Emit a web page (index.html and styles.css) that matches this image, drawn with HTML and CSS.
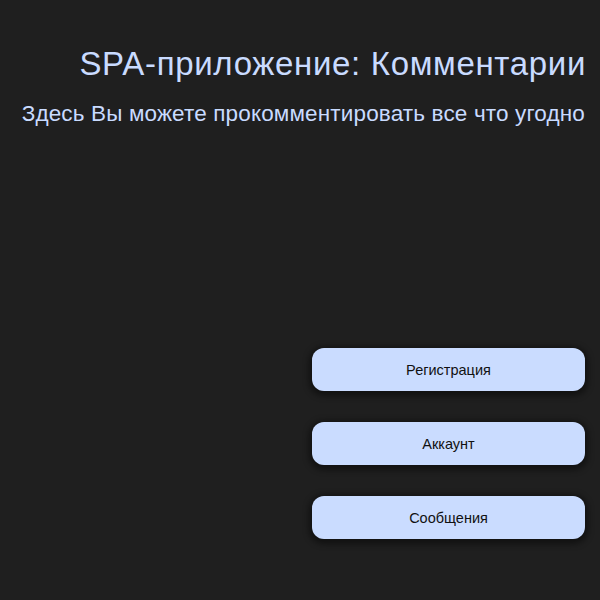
FILE: index.html
```html
<!DOCTYPE html>
<html lang="ru">
<head>
<meta charset="utf-8">
<link rel="stylesheet" href="styles.css">
</head>
<body>
<div class="page">
  <header class="header">
    <h1 class="title">SPA-приложение: Комментарии</h1>
    <p class="subtitle">Здесь Вы можете прокомментировать все что угодно</p>
  </header>
  <nav class="menu">
    <button class="btn">Регистрация</button>
    <button class="btn">Аккаунт</button>
    <button class="btn">Сообщения</button>
  </nav>
</div>
</body>
</html>
```
FILE: styles.css
```css
html, body {
  margin: 0;
  padding: 0;
  background: #1f1f1f;
  height: 100%;
}
.page {
  font-family: "Liberation Sans", Arial, sans-serif;
  padding: 0 15px 0 0;
  display: flex;
  flex-direction: column;
  align-items: flex-end;
}
.header {
  text-align: right;
  padding-top: 44px;
}
.title {
  margin: 0;
  font-size: 33px;
  font-weight: normal;
  color: #c9dbff;
  line-height: 40px;
  letter-spacing: 0.67px;
  margin-right: -1px;
}
.subtitle {
  margin: 15px 0 0;
  font-size: 22.5px;
  color: #c9dbff;
  line-height: 30px;
  letter-spacing: 0.15px;
}
.menu {
  margin-top: 219px;
  display: flex;
  flex-direction: column;
  gap: 31px;
  width: 273px;
}
.btn {
  height: 43px;
  border: none;
  border-radius: 12px;
  background: #cadcff;
  color: #111;
  font-family: "Liberation Sans", Arial, sans-serif;
  font-size: 14.5px;
  box-shadow: 0 2px 6px 3px rgba(0,0,0,0.45);
}
```
